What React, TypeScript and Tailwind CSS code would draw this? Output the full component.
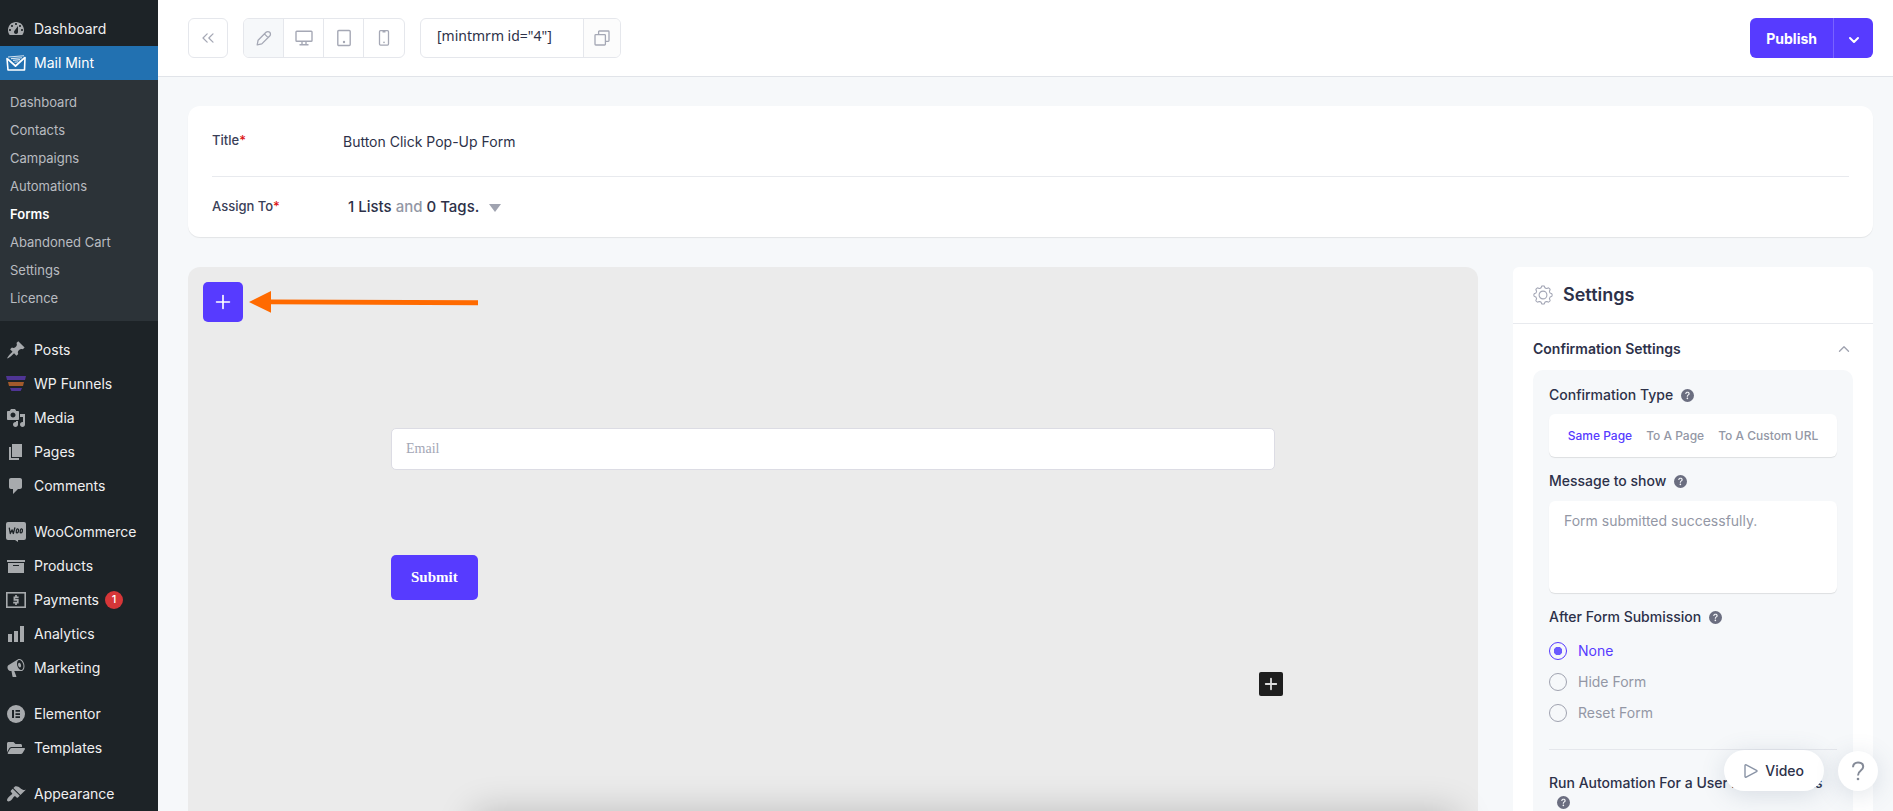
import React, { useState } from 'react';
import clsx from 'clsx';
import { ChevronDown, ChevronUp, ChevronsLeft, Plus } from 'lucide-react';
import { FaFolderOpen } from 'react-icons/fa';
import { BsQuestionCircleFill } from 'react-icons/bs';

const Glyph: React.FC<{ d: string }> = ({ d }) => (
  <svg viewBox="0 0 20 20" className="w-5 h-5" fill="currentColor" fillRule="evenodd">
    <path d={d} />
  </svg>
);

const MailMintIcon = () => (
  <svg viewBox="0 0 20 20" className="w-5 h-5" fill="none" stroke="currentColor">
    <path d="M1 5.5L2 17h16.5L19 4.5" strokeWidth="1.6" strokeLinejoin="round" strokeLinecap="round" />
    <path d="M1.2 5.6l8.3 7.4L19 4.4" strokeWidth="1.8" strokeLinejoin="round" />
    <path d="M2 4l16-1.2M5 5.6l11-.8M7 7.4l7-.8M8.6 9.2l3.6-.4" strokeWidth="1.1" opacity="0.8" />
  </svg>
);

const FunnelIcon = () => (
  <svg viewBox="0 0 20 20" className="w-5 h-5 shrink-0">
    <path d="M0 2h20l-1 4H1z" fill="#4f3595" />
    <path d="M2 8h16l-1 4H3z" fill="#a35a2c" />
    <path d="M4 14h12l-1.4 3H5.4z" fill="#4f3595" />
  </svg>
);

const WooIcon = () => (
  <svg viewBox="0 0 20 20" className="w-5 h-5">
    <path d="M2 0h16a2 2 0 0 1 2 2v14a2 2 0 0 1-2 2h-6v2l-3-2H2a2 2 0 0 1-2-2V2a2 2 0 0 1 2-2z" fill="#a7aaad" />
    <g fill="none" stroke="#1d2327" strokeWidth="1.3" strokeLinejoin="round" strokeLinecap="round">
      <path d="M3.3 6.2l1 5.3 1.8-3.6 1.2 3.6L8.8 6" />
      <ellipse cx="11.4" cy="8.8" rx="1.1" ry="2" transform="rotate(12 11.4 8.8)" />
      <ellipse cx="15.3" cy="8.8" rx="1.1" ry="2" transform="rotate(12 15.3 8.8)" />
    </g>
  </svg>
);

const PaymentsIcon = () => (
  <svg viewBox="0 0 20 20" className="w-5 h-5" fill="none" stroke="currentColor">
    <rect x="0.8" y="2.8" width="18.4" height="14.4" strokeWidth="1.6" />
    <path d="M12.6 7.4H8.4v2.5h3.4v2.7H7.2M10 5v2.4M10 12.6V15" strokeWidth="1.7" />
  </svg>
);

const ElementorIcon = () => (
  <svg viewBox="0 0 20 20" className="w-5 h-5">
    <circle cx="10" cy="10" r="9" fill="#a7aaad" />
    <path d="M6 6h2v8H6zM9.5 6H14v1.7H9.5zM9.5 9.2H14v1.7H9.5zM9.5 12.3H14V14H9.5z" fill="#1d2327" />
  </svg>
);

const PencilIcon = () => (
  <svg viewBox="0 0 16 16" className="w-4 h-4" fill="none" stroke="currentColor" strokeWidth="1.3" strokeLinejoin="round">
    <path d="M1.2 14.8l.9-4.6 7.9-7.9a2.6 2.6 0 0 1 3.7 3.7l-7.9 7.9zM8.4 3.9l3.7 3.7" />
  </svg>
);

const DesktopIcon = () => (
  <svg viewBox="0 0 18 16" className="w-[18px] h-4" fill="none" stroke="currentColor" strokeWidth="1.4" strokeLinejoin="round">
    <rect x="1" y="1.2" width="16" height="10" rx="0.8" />
    <path d="M7 11.2v3.3M11 11.2v3.3M4.5 14.8h9" />
  </svg>
);

const TabletIcon = () => (
  <svg viewBox="0 0 14 18" className="w-[14px] h-[18px]" fill="none" stroke="currentColor" strokeWidth="1.4">
    <rect x="0.8" y="1.5" width="12.4" height="15" rx="1" />
    <circle cx="7" cy="13" r="1.2" fill="currentColor" stroke="none" />
  </svg>
);

const PhoneIcon = () => (
  <svg viewBox="0 0 12 18" className="w-3 h-[18px]" fill="none" stroke="currentColor" strokeWidth="1.3">
    <rect x="1.5" y="1.7" width="9" height="14.4" rx="1" />
    <path d="M4.5 2.6h3" strokeWidth="1.6" />
    <circle cx="6" cy="13.4" r="0.8" fill="currentColor" stroke="none" />
  </svg>
);

const CopyIcon = () => (
  <svg viewBox="0 0 16 16" className="w-4 h-4" fill="none" stroke="currentColor" strokeWidth="1.3" strokeLinejoin="round">
    <rect x="1" y="4.6" width="10.4" height="10.4" rx="0.8" />
    <path d="M4.6 4.6V1.8c0-.5.3-.8.8-.8h8.8c.5 0 .8.3.8.8v8.8c0 .5-.3.8-.8.8h-2.8" />
  </svg>
);

// Outline of a gear with eight rounded teeth
const gearPoints = Array.from({ length: 144 }, (_, i) => {
  const angle = (i / 144) * Math.PI * 2;
  const r = 8.2 + 0.9 * Math.tanh(2.4 * Math.cos(8 * angle));
  return `${(10 + r * Math.cos(angle)).toFixed(2)},${(10 + r * Math.sin(angle)).toFixed(2)}`;
}).join(' ');

const GearIcon = () => (
  <svg viewBox="0 0 20 20" className="w-5 h-5 text-[#a3a6b5]" fill="none" stroke="currentColor" strokeWidth="1.1" strokeLinejoin="round">
    <polygon points={gearPoints} />
    <circle cx="10" cy="10" r="3.9" />
  </svg>
);

const PATHS = {
  dashboard:
    'M3.76 16h12.48c1.1-1.37 1.76-3.11 1.76-5 0-4.42-3.58-8-8-8s-8 3.58-8 8c0 1.89.66 3.63 1.76 5zM10 4c.55 0 1 .45 1 1s-.45 1-1 1-1-.45-1-1 .45-1 1-1zM6 6c.55 0 1 .45 1 1s-.45 1-1 1-1-.45-1-1 .45-1 1-1zm8 0c.55 0 1 .45 1 1s-.45 1-1 1-1-.45-1-1 .45-1 1-1zm-5.37 5.55L12 7v6c0 1.1-.9 2-2 2s-2-.9-2-2c0-.57.24-1.08.63-1.45zM4 10c.55 0 1 .45 1 1s-.45 1-1 1-1-.45-1-1 .45-1 1-1zm12 0c.55 0 1 .45 1 1s-.45 1-1 1-1-.45-1-1 .45-1 1-1z',
  posts:
    'M10.44 3.02l1.82-1.82 6.36 6.35-1.83 1.82c-1.05-.68-2.48-.57-3.41.36l-.75.75c-.92.93-1.04 2.35-.35 3.41l-1.83 1.82-2.41-2.41-2.8 2.79c-.42.42-3.38 2.71-3.8 2.29s1.86-3.39 2.28-3.81l2.79-2.79L4.1 9.36l1.83-1.82c1.05.69 2.48.57 3.4-.36l.75-.75c.93-.92 1.05-2.35.36-3.41z',
  media:
    'M13 11V4c0-.55-.45-1-1-1h-1.67L9 1H5L3.67 3H2c-.55 0-1 .45-1 1v7c0 .55.45 1 1 1h10c.55 0 1-.45 1-1zM7 4.5c1.38 0 2.5 1.12 2.5 2.5S8.38 9.5 7 9.5 4.5 8.38 4.5 7 5.62 4.5 7 4.5zM14 6h5v10.5c0 1.38-1.12 2.5-2.5 2.5S14 17.88 14 16.5s1.12-2.5 2.5-2.5c.17 0 .34.02.5.05V9h-3V6zm-4 8.05V13h2v3.5c0 1.38-1.12 2.5-2.5 2.5S7 17.88 7 16.5 8.12 14 9.5 14c.17 0 .34.02.5.05z',
  pages: 'M6 15V2h10v13H6zm-1 1h8v2H3V5h2v11z',
  comments: 'M5 2h9c1.1 0 2 .9 2 2v7c0 1.1-.9 2-2 2h-2l-5 5v-5H5c-1.1 0-2-.9-2-2V4c0-1.1.9-2 2-2z',
  products: 'M19 4v2H1V4h18zM2 7h16v10H2V7zm11 3V9H7v1h6z',
  analytics: 'M18 18V2h-4v16h4zm-6 0V7H8v11h4zm-6 0v-8H2v8h4z',
  marketing:
    'M18.15 5.94c.46 1.62.38 3.22-.02 4.48-.42 1.28-1.26 2.18-2.3 2.48-.16.06-.26.06-.4.06-.06.02-.12.02-.18.02-.06.02-.14.02-.22.02h-6.8l2.22 5.5c.02.14-.06.26-.14.34-.08.1-.24.16-.34.16H6.95c-.1 0-.26-.06-.34-.16-.08-.08-.16-.2-.14-.34l-1-5.5H4.25l-.02-.02c-.5.06-1.08-.18-1.54-.62s-.88-1.08-1.06-1.88c-.24-.8-.2-1.56-.02-2.2.18-.62.58-1.08 1.06-1.3l.02-.02 9-5.4c.1-.06.18-.1.24-.16.06-.04.14-.08.24-.12.16-.08.28-.12.5-.18 1.04-.3 2.24.1 3.22.98s1.84 2.24 2.26 3.86zm-2.58 5.98h-.02c.4-.1.74-.34 1.04-.7.58-.7.86-1.76.86-3.04 0-.64-.1-1.3-.28-1.98-.34-1.36-1.02-2.5-1.78-3.24s-1.68-1.1-2.46-.88c-.82.22-1.4.96-1.7 2-.32 1.04-.28 2.36.06 3.72.38 1.36 1 2.5 1.8 3.24.78.74 1.62 1.1 2.48.88zm-2.54-7.08c.22-.04.42-.02.62.04.38.16.76.48 1.02 1s.42 1.2.42 1.78c0 .3-.04.56-.12.8-.18.48-.44.84-.86.94-.34.1-.8-.06-1.14-.4s-.64-.86-.78-1.5c-.18-.62-.12-1.24.02-1.72s.48-.84.82-.94z',
  appearance:
    'M14.48 11.06L7.41 3.99l1.5-1.5c.5-.56 2.3-.47 3.51.32 1.21.8 1.43 1.28 2.91 2.1 1.18.64 2.45 1.26 4.45.85zm-.71.71L6.7 4.7 4.93 6.47c-.39.39-.39 1.02 0 1.41l1.06 1.06c.39.39.39 1.03 0 1.42-.6.6-1.43 1.11-2.21 1.69-.35.26-.7.53-1.01.84C1.43 14.23.4 16.08 1.4 17.07c.99 1 2.84-.03 4.18-1.36.31-.31.58-.66.85-1.02.57-.78 1.08-1.61 1.69-2.21.39-.39 1.02-.39 1.41 0l1.06 1.06c.39.39 1.02.39 1.41 0z',
};

interface NavItem {
  label: string;
  icon: React.ReactNode;
  badge?: number;
}

const navGroups: NavItem[][] = [
  [
    { label: 'Posts', icon: <Glyph d={PATHS.posts} /> },
    { label: 'WP Funnels', icon: <FunnelIcon /> },
    { label: 'Media', icon: <Glyph d={PATHS.media} /> },
    { label: 'Pages', icon: <Glyph d={PATHS.pages} /> },
    { label: 'Comments', icon: <Glyph d={PATHS.comments} /> },
  ],
  [
    { label: 'WooCommerce', icon: <WooIcon /> },
    { label: 'Products', icon: <Glyph d={PATHS.products} /> },
    { label: 'Payments', icon: <PaymentsIcon />, badge: 1 },
    { label: 'Analytics', icon: <Glyph d={PATHS.analytics} /> },
    { label: 'Marketing', icon: <Glyph d={PATHS.marketing} /> },
  ],
  [
    { label: 'Elementor', icon: <ElementorIcon /> },
    { label: 'Templates', icon: <FaFolderOpen className="w-[18px] h-4" /> },
  ],
  [{ label: 'Appearance', icon: <Glyph d={PATHS.appearance} /> }],
];

const subItems = ['Dashboard', 'Contacts', 'Campaigns', 'Automations', 'Forms', 'Abandoned Cart', 'Settings', 'Licence'];

const NavLink: React.FC<{ item: NavItem; active?: boolean }> = ({ item, active }) => (
  <a
    href="#"
    className={clsx(
      'flex items-center h-[34px] pl-[6px] text-sm',
      active ? 'bg-[#2271b1] text-white' : 'text-[#f0f0f1]'
    )}
  >
    <span className={clsx('flex items-center justify-center w-5 mr-2', active ? 'text-white' : 'text-[#a7aaad]')}>
      {item.icon}
    </span>
    {item.label}
    {item.badge && (
      <span className="flex items-center justify-center w-[18px] h-[18px] ml-[6px] rounded-full bg-[#d63638] text-[11px] font-medium text-white">
        {item.badge}
      </span>
    )}
  </a>
);

const Sidebar = () => (
  <nav className="w-[158px] shrink-0 bg-[#1d2327] pt-3">
    <NavLink item={{ label: 'Dashboard', icon: <Glyph d={PATHS.dashboard} /> }} />
    <NavLink item={{ label: 'Mail Mint', icon: <MailMintIcon /> }} active />
    <ul className="bg-[#2c3338] pt-[9px] pb-2">
      {subItems.map(label => (
        <li key={label}>
          <a
            href="#"
            className={clsx(
              'flex items-center h-7 pl-[10px] text-[13px]',
              label === 'Forms' ? 'font-semibold text-white' : 'text-[#b9bcc0]'
            )}
          >
            {label}
          </a>
        </li>
      ))}
    </ul>
    {navGroups.map((group, i) => (
      <div key={i} className="mt-3">
        {group.map(item => (
          <NavLink key={item.label} item={item} />
        ))}
      </div>
    ))}
  </nav>
);

const devices = [
  { name: 'Edit', icon: <PencilIcon /> },
  { name: 'Desktop', icon: <DesktopIcon /> },
  { name: 'Tablet', icon: <TabletIcon /> },
  { name: 'Mobile', icon: <PhoneIcon /> },
];

const TopBar = () => {
  const [device, setDevice] = useState('Edit');

  return (
    <header className="flex items-center shrink-0 h-[77px] pl-[30px] pr-5 bg-white border-b border-[#e1e4e9] text-[#a5a8b5]">
      <button aria-label="Back" className="flex items-center justify-center w-10 h-10 border border-[#e5e7ec] rounded-md">
        <ChevronsLeft className="w-5 h-5" strokeWidth={1.5} />
      </button>
      <div className="flex h-10 ml-[15px] border border-[#e5e7ec] rounded-md overflow-hidden divide-x divide-[#e5e7ec]">
        {devices.map(d => (
          <button
            key={d.name}
            aria-label={d.name}
            onClick={() => setDevice(d.name)}
            className={clsx('flex items-center justify-center w-10', device === d.name && 'bg-[#f6f8fa]')}
          >
            {d.icon}
          </button>
        ))}
      </div>
      <div className="flex h-10 ml-[15px] border border-[#e5e7ec] rounded-md overflow-hidden">
        <input
          aria-label="Shortcode"
          readOnly
          value={'[mintmrm id="4"]'}
          className="w-[162px] px-4 pb-1 text-sm text-[#2d3149] font-['Noto_Sans',sans-serif] outline-none"
        />
        <button aria-label="Copy shortcode" className="flex items-center justify-center w-[37px] border-l border-[#e5e7ec] bg-[#fcfcfc]">
          <CopyIcon />
        </button>
      </div>
      <div className="flex h-10 ml-auto rounded-md overflow-hidden bg-[#573bff] text-white">
        <button className="px-4 pt-px text-sm font-bold">Publish</button>
        <button aria-label="More publish options" className="flex items-center justify-center w-10 pt-1 border-l border-[#7962ff]">
          <ChevronDown className="w-4 h-4" strokeWidth={3} />
        </button>
      </div>
    </header>
  );
};

const FormDetails = () => {
  const [title, setTitle] = useState('Button Click Pop-Up Form');

  return (
    <section className="px-6 bg-white rounded-xl shadow-[0_1px_1px_rgba(0,0,0,0.08)]">
      <div className="flex items-center h-[71px] border-b border-[#e8eaee]">
        <label htmlFor="form-title" className="w-[131px] pb-px text-[13px] font-medium text-[#3a4057]">
          Title<span className="text-[#dc1414]">*</span>
        </label>
        <input
          id="form-title"
          value={title}
          onChange={e => setTitle(e.target.value)}
          className="flex-1 pt-px text-sm text-[#2d3149] outline-none"
        />
      </div>
      <div className="flex items-center h-[60px]">
        <span className="w-[131px] pb-px text-[13px] font-medium text-[#3a4057]">
          Assign To<span className="text-[#dc1414]">*</span>
        </span>
        <button className="flex items-center pl-[5px] pt-px text-[15px] font-medium text-[#2d3149]">
          <span>
            1 Lists <span className="text-[#9397a5]">and</span> 0 Tags.
          </span>
          <svg viewBox="0 0 12 8" className="w-3 h-2 ml-[10px] text-[#a0a3b0]" fill="currentColor">
            <path d="M0 0h12L6 8z" />
          </svg>
        </button>
      </div>
    </section>
  );
};

const FormCanvas = () => (
  <section className="flex-1 p-[15px] bg-[#ebebeb] rounded-t-xl">
    <div className="flex items-center gap-[5px]">
      <button aria-label="Add block" className="flex items-center justify-center w-10 h-10 rounded-[5px] bg-[#573bff] text-white">
        <Plus className="w-[22px] h-[22px]" strokeWidth={1.8} />
      </button>
      <svg viewBox="0 0 232 24" className="w-[232px] h-6" fill="#ff6a00">
        <path d="M1 12L23 1v8.6l207 .6v5l-207-.9v8.4z" />
      </svg>
    </div>
    <form className="max-w-[884px] mx-auto mt-[106px] font-['Liberation_Serif',serif]" onSubmit={e => e.preventDefault()}>
      <input
        type="email"
        aria-label="Email"
        placeholder="Email"
        className="block w-full h-[42px] px-[14px] bg-white border border-[#dcdce4] rounded-[5px] text-sm placeholder:text-[#a3a6b5] outline-none"
      />
      <button className="block h-[45px] mt-[85px] px-5 rounded-[5px] bg-[#573bff] text-[15px] font-bold text-white">Submit</button>
    </form>
    <div className="flex justify-end max-w-[900px] mx-auto mt-[72px]">
      <button aria-label="Insert block" className="flex items-center justify-center w-6 h-6 rounded-[2px] bg-[#1e1e1e] text-[#dddddd]">
        <Plus className="w-[18px] h-[18px]" strokeWidth={2.4} />
      </button>
    </div>
  </section>
);

const HelpMark: React.FC = () => <BsQuestionCircleFill className="inline-block w-[13px] h-[13px] ml-2 text-[#6b6e80]" />;

const confirmationTypes = ['Same Page', 'To A Page', 'To A Custom URL'];
const afterSubmission = ['None', 'Hide Form', 'Reset Form'];

const SettingsPanel = () => {
  const [type, setType] = useState('Same Page');
  const [after, setAfter] = useState('None');

  return (
    <aside className="w-[360px] shrink-0 bg-white rounded-t-md text-[#2d3149]">
      <div className="flex items-center gap-[10px] h-[57px] px-5 pb-px border-b border-[#e8eaee]">
        <GearIcon />
        <h2 className="text-lg font-semibold">Settings</h2>
      </div>
      <div className="px-5">
        <button className="flex items-center justify-between w-full h-[46px] pt-1 text-sm font-semibold">
          Confirmation Settings
          <ChevronUp className="w-[18px] h-[18px] text-[#a0a3b0]" strokeWidth={1.8} />
        </button>
        <div className="px-4 pt-[14px] pb-6 bg-[#f6f8fa] rounded-[10px]">
          <h3 className="flex items-center h-[22px] text-sm font-medium">
            Confirmation Type
            <HelpMark />
          </h3>
          <div className="flex items-center justify-center gap-[14px] h-[43px] mt-2 bg-white rounded-md shadow-[0_1px_1px_rgba(0,0,0,0.1)]">
            {confirmationTypes.map(t => (
              <button
                key={t}
                onClick={() => setType(t)}
                className={clsx('text-xs font-medium', type === t ? 'text-[#573bff]' : 'text-[#9397a5]')}
              >
                {t}
              </button>
            ))}
          </div>
          <label htmlFor="message" className="flex items-center h-[22px] mt-[13px] text-sm font-medium">
            Message to show
            <HelpMark />
          </label>
          <textarea
            id="message"
            placeholder="Form submitted successfully."
            className="block w-full h-[92px] mt-[9px] px-[15px] py-[10px] bg-white rounded-md text-sm placeholder:text-[#9397a5] resize-none outline-none shadow-[0_1px_1px_rgba(0,0,0,0.1)]"
          />
          <fieldset className="mt-[13px]">
            <legend className="flex items-center h-[22px] text-sm font-medium">
              After Form Submission
              <HelpMark />
            </legend>
            <div className="flex flex-col gap-[11px] pt-[13px]">
              {afterSubmission.map(option => (
                <label
                  key={option}
                  className={clsx('flex items-center h-5 text-sm', after === option ? 'text-[#573bff]' : 'text-[#9397a5]')}
                >
                  <input
                    type="radio"
                    name="after"
                    checked={after === option}
                    onChange={() => setAfter(option)}
                    className="appearance-none w-[18px] h-[18px] mr-[11px] rounded-full border border-[#a0a3b0] checked:border-[#573bff] checked:bg-[radial-gradient(circle,#6b5bff_4px,transparent_4.5px)]"
                  />
                  {option}
                </label>
              ))}
            </div>
          </fieldset>
          <p className="mt-[26px] pt-[24px] border-t border-[#e5e7ec] text-sm leading-[18px] font-medium">
            Run Automation For a User After Submits <HelpMark />
          </p>
        </div>
      </div>
    </aside>
  );
};

const App: React.FC = () => (
  <div className="relative flex h-screen overflow-hidden bg-[#f6f8fa] font-[Inter,sans-serif]">
    <Sidebar />
    <div className="flex flex-col flex-1 min-w-0">
      <TopBar />
      <main className="flex flex-col flex-1 pt-[29px] pl-[30px] pr-5">
        <FormDetails />
        <div className="flex flex-1 gap-[35px] mt-[30px]">
          <FormCanvas />
          <SettingsPanel />
        </div>
      </main>
    </div>

    {/* Snackbar edge, its shadow shows above the bottom of the window */}
    <div className="absolute top-full left-1/4 right-[23%] h-20 rounded-lg shadow-[0_0_36px_rgba(0,0,0,0.2)]" />

    {/* Floating help buttons */}
    <div className="absolute bottom-5 right-[15px] flex items-center gap-[14px]">
      <button className="flex items-center gap-[7px] h-[41px] px-5 rounded-full bg-white text-sm font-medium text-[#2d3149] shadow-[0_4px_24px_rgba(80,100,130,0.18)]">
        <svg viewBox="0 0 14 14" className="w-[14px] h-[14px] text-[#8a94a6]" fill="none" stroke="currentColor" strokeWidth="1.4" strokeLinejoin="round">
          <path d="M1 1.6c0-.7.6-1 1.2-.7l10.3 5.4c.7.4.7 1 0 1.4L2.2 13.1c-.6.3-1.2 0-1.2-.7z" />
        </svg>
        Video
      </button>
      <button aria-label="Help" className="flex items-center justify-center w-10 h-10 rounded-full bg-white shadow-[0_4px_24px_rgba(80,100,130,0.18)]">
        <svg viewBox="0 0 14 20" className="w-[14px] h-5 text-[#858b98]" fill="none" stroke="currentColor" strokeWidth="2">
          <path d="M2 6.2C2 3.2 4 1.4 7 1.4s5.2 1.7 5.2 4.4c0 2-1.1 2.9-2.6 4C7.9 11 7 11.8 7 14.4" />
          <circle cx="7" cy="18" r="1.3" fill="currentColor" stroke="none" />
        </svg>
      </button>
    </div>
  </div>
);

export default App;
